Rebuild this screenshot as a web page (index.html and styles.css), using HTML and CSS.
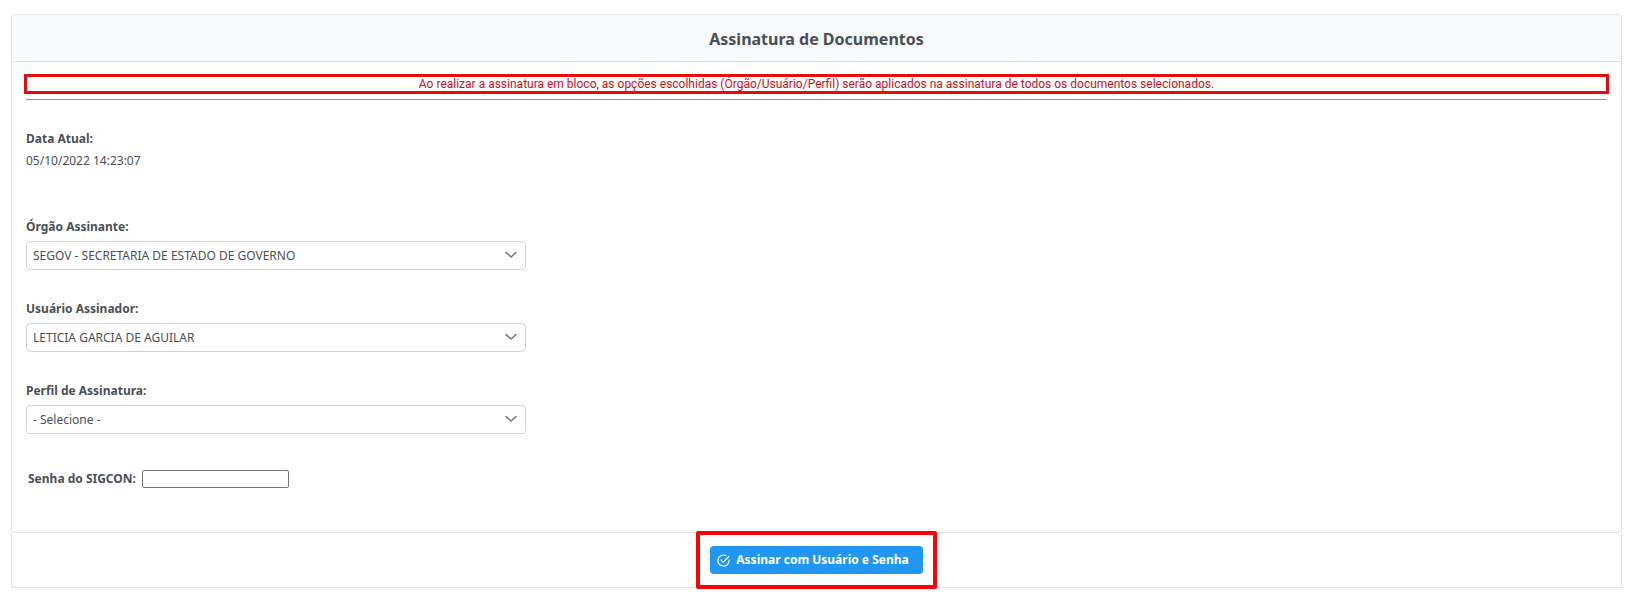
FILE: index.html
```html
<!DOCTYPE html>
<html lang="pt-BR">
<head>
  <meta charset="UTF-8">
  <meta name="viewport" content="width=device-width, initial-scale=1.0">
  <title>Assinatura de Documentos</title>
  <link rel="stylesheet" href="styles.css">
</head>
<body>
  <form class="page">
    <section class="panel">
      <header class="panel-header">
        <h1 class="panel-title">Assinatura de Documentos</h1>
      </header>

      <div class="panel-content">
        <p class="notice">Ao realizar a assinatura em bloco, as opções escolhidas (Órgão/Usuário/Perfil) serão aplicados na assinatura de todos os documentos selecionados.</p>
        <hr class="divider">

        <div class="current-date">
          <span class="label">Data Atual:</span>
          <time datetime="2022-10-05T14:23:07">05/10/2022 14:23:07</time>
        </div>

        <div class="fields">
          <div class="field">
            <label class="label" for="orgao">Órgão Assinante:</label>
            <div class="dropdown">
              <select id="orgao">
                <option>SEGOV - SECRETARIA DE ESTADO DE GOVERNO</option>
              </select>
              <svg class="dropdown-icon" viewBox="0 0 14 14" aria-hidden="true"><path d="M2 4.500l5 4.500 5-4.500"/></svg>
            </div>
          </div>

          <div class="field">
            <label class="label" for="usuario">Usuário Assinador:</label>
            <div class="dropdown">
              <select id="usuario">
                <option>LETICIA GARCIA DE AGUILAR</option>
              </select>
              <svg class="dropdown-icon" viewBox="0 0 14 14" aria-hidden="true"><path d="M2 4.500l5 4.500 5-4.500"/></svg>
            </div>
          </div>

          <div class="field">
            <label class="label" for="perfil">Perfil de Assinatura:</label>
            <div class="dropdown">
              <select id="perfil">
                <option>- Selecione -</option>
              </select>
              <svg class="dropdown-icon" viewBox="0 0 14 14" aria-hidden="true"><path d="M2 4.500l5 4.500 5-4.500"/></svg>
            </div>
          </div>
        </div>

        <div class="password">
          <label class="label" for="senha">Senha do SIGCON:</label>
          <input type="password" id="senha">
        </div>
      </div>
    </section>

    <footer class="panel-footer">
      <div class="highlight">
        <button type="button" class="btn">
          <svg class="btn-icon" viewBox="0 0 14 14" aria-hidden="true">
            <path d="M13 6.400v.6a6 6 0 1 1-3.500-5.400"/>
            <path d="M4.200 6.400l2.500 2.500 6-6.200"/>
          </svg>
          Assinar com Usuário e Senha
        </button>
      </div>
    </footer>
  </form>
</body>
</html>
```

FILE: styles.css
```css
:root {
  --text-color: #495057;
  --panel-border: #dee2e6;
  --header-bg: #f8f9fa;
  --input-border: #ced4da;
  --primary-color: #2196f3;
  --alert-text: #c8101e;
  --alert-border: #e30b0b;
}

* {
  box-sizing: border-box;
  margin: 0;
  padding: 0;
}

body {
  font-family: Tahoma, "Noto Sans", sans-serif;
  font-size: 12px;
  line-height: 16px;
  color: var(--text-color);
  background-color: white;
}

.page {
  padding: 14px 10px 16px 11px;
}

.panel {
  border: 1px solid var(--panel-border);
  border-radius: 4px;
}

.panel-header {
  padding: 13px 12px 11px;
  background-color: var(--header-bg);
  border-bottom: 1px solid var(--panel-border);
  border-radius: 3px 3px 0 0;
}

.panel-title {
  font-size: 16px;
  line-height: 22px;
  text-align: center;
}

.panel-content {
  padding: 12px 14px 44px;
}

.notice {
  margin: 0 -2px;
  border: 3px solid var(--alert-border);
  font-family: Tahoma, Roboto, sans-serif;
  line-height: 14px;
  text-align: center;
  color: var(--alert-text);
}

.divider {
  margin: 5px 0 31px;
  border: 0;
  border-top: 1px solid #909090;
}

.label {
  font-weight: 700;
}

.current-date {
  display: flex;
  flex-direction: column;
  gap: 6px;
  margin-bottom: 50px;
}

.fields {
  display: flex;
  flex-direction: column;
  gap: 31px;
  max-width: 500px;
}

.field {
  display: flex;
  flex-direction: column;
  gap: 6px;
}

.dropdown {
  position: relative;
}

.dropdown select {
  appearance: none;
  display: block;
  width: 100%;
  height: 29px;
  padding: 0 32px 0 6px;
  border: 1px solid var(--input-border);
  border-radius: 4px;
  background-color: white;
  font: inherit;
  color: inherit;
}

.dropdown-icon {
  position: absolute;
  top: 7px;
  right: 8px;
  width: 14px;
  height: 14px;
  fill: none;
  stroke: #6c757d;
  stroke-width: 1.500;
  stroke-linecap: round;
  stroke-linejoin: round;
  pointer-events: none;
}

.password {
  display: flex;
  align-items: center;
  gap: 6px;
  margin-top: 36px;
  padding-left: 2px;
}

.password input {
  width: 147px;
  height: 18px;
  padding: 0 2px;
  border: 1px solid #767676;
  border-radius: 2px;
}

.panel-footer {
  display: flex;
  justify-content: center;
  height: 55px;
  border: 1px solid var(--panel-border);
  border-top: 0;
}

.highlight {
  display: flex;
  margin: -2px 0;
  padding: 11px 10px;
  border: 4px solid #fb0007;
  border-radius: 2px;
}

.btn {
  display: flex;
  align-items: center;
  gap: 6px;
  height: 28px;
  padding: 0 14px 0 7px;
  border: 0;
  border-radius: 4px;
  background-color: var(--primary-color);
  font: inherit;
  font-weight: 700;
  color: white;
  cursor: pointer;
}

.btn-icon {
  width: 13px;
  height: 13px;
  fill: none;
  stroke: white;
  stroke-width: 1.200;
  stroke-linecap: round;
  stroke-linejoin: round;
}
```
